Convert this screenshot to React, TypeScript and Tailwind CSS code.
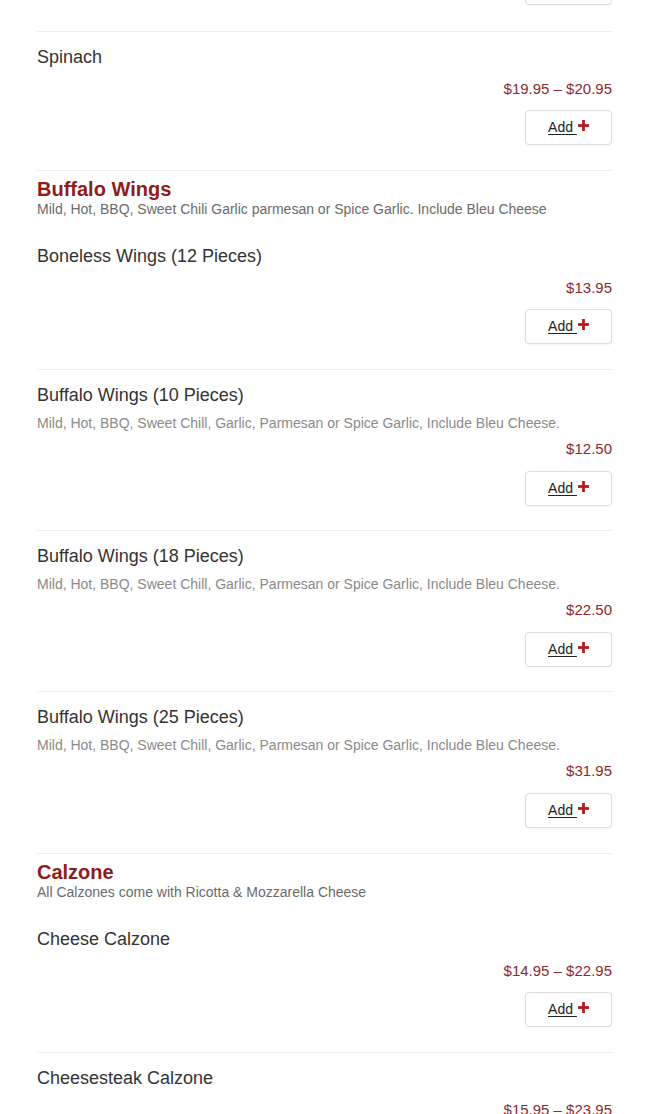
import React from "react";

type Item = { name: string; desc?: string; price: string };

function PlusIcon() {
  return (
    <svg width="11" height="11" viewBox="0 0 12 12" className="inline-block ml-[1px] -mt-[4px] align-middle">
      <rect x="4.5" y="0" width="3" height="12" fill="#b3191f" />
      <rect x="0" y="4.5" width="12" height="3" fill="#b3191f" />
    </svg>
  );
}

function AddButton() {
  return (
    <button className="w-[87px] h-[35px] rounded-[4px] border border-[#dcdcdc] bg-white shadow-[0_1px_2px_rgba(0,0,0,0.05)] text-[14px] text-[#222] flex items-center justify-center">
      <span className="underline decoration-[1px] underline-offset-[2px]">Add&nbsp;</span>
      <PlusIcon />
    </button>
  );
}

function MenuItem({ item, first, pb }: { item: Item; first?: boolean; pb?: string }) {
  return (
    <div className={`border-t ${first ? "border-transparent" : "border-[#ececec]"} pt-[12px] ${pb ?? (item.desc ? "pb-[24px]" : "pb-[25px]")}`}>
      <div className="text-[18px] leading-[26px] text-[#333]">{item.name}</div>
      {item.desc && (
        <div className="mt-[5px] text-[14px] leading-[20px] text-[#8a8a8a]">{item.desc}</div>
      )}
      <div className={`${item.desc ? "mt-[5px]" : "mt-[8px]"} text-right text-[15px] leading-[22px] text-[#8b2a2a]`}>
        {item.price}
      </div>
      <div className={`${item.desc ? "mt-[11px]" : "mt-[10px]"} flex justify-end`}>
        <AddButton />
      </div>
    </div>
  );
}

function Category({ title, sub, items }: { title: string; sub: string; items: Item[] }) {
  return (
    <div>
      <div className="border-t border-[#ececec] pt-[7px] mb-[12px]">
        <div className="text-[20px] leading-[22px] font-bold text-[#8f1c1c]">{title}</div>
        <div className="text-[14px] leading-[18px] text-[#6b6b6b]">{sub}</div>
      </div>
      {items.map((it, i) => (
        <MenuItem key={it.name} item={it} first={i === 0} pb={i === items.length - 1 && it.desc ? "pb-[25px]" : undefined} />
      ))}
    </div>
  );
}

export default function App() {
  const wings: Item[] = [
    { name: "Boneless Wings (12 Pieces)", price: "$13.95" },
    {
      name: "Buffalo Wings (10 Pieces)",
      desc: "Mild, Hot, BBQ, Sweet Chill, Garlic, Parmesan or Spice Garlic, Include Bleu Cheese.",
      price: "$12.50",
    },
    {
      name: "Buffalo Wings (18 Pieces)",
      desc: "Mild, Hot, BBQ, Sweet Chill, Garlic, Parmesan or Spice Garlic, Include Bleu Cheese.",
      price: "$22.50",
    },
    {
      name: "Buffalo Wings (25 Pieces)",
      desc: "Mild, Hot, BBQ, Sweet Chill, Garlic, Parmesan or Spice Garlic, Include Bleu Cheese.",
      price: "$31.95",
    },
  ];
  const calzones: Item[] = [
    { name: "Cheese Calzone", price: "$14.95 – $22.95" },
    { name: "Cheesesteak Calzone", price: "$15.95 – $23.95" },
  ];
  return (
    <div className="bg-white h-[1114px] overflow-hidden font-['Liberation_Sans',Arial,sans-serif]">
      <div className="ml-[37px] w-[575px]">
        <div className="h-[31px] overflow-hidden">
          <div className="-mt-[30px] flex justify-end">
            <AddButton />
          </div>
        </div>
        <MenuItem item={{ name: "Spinach", price: "$19.95 – $20.95" }} />
        <Category
          title="Buffalo Wings"
          sub="Mild, Hot, BBQ, Sweet Chili Garlic parmesan or Spice Garlic. Include Bleu Cheese"
          items={wings}
        />
        <Category title="Calzone" sub="All Calzones come with Ricotta & Mozzarella Cheese" items={calzones} />
      </div>
    </div>
  );
}
